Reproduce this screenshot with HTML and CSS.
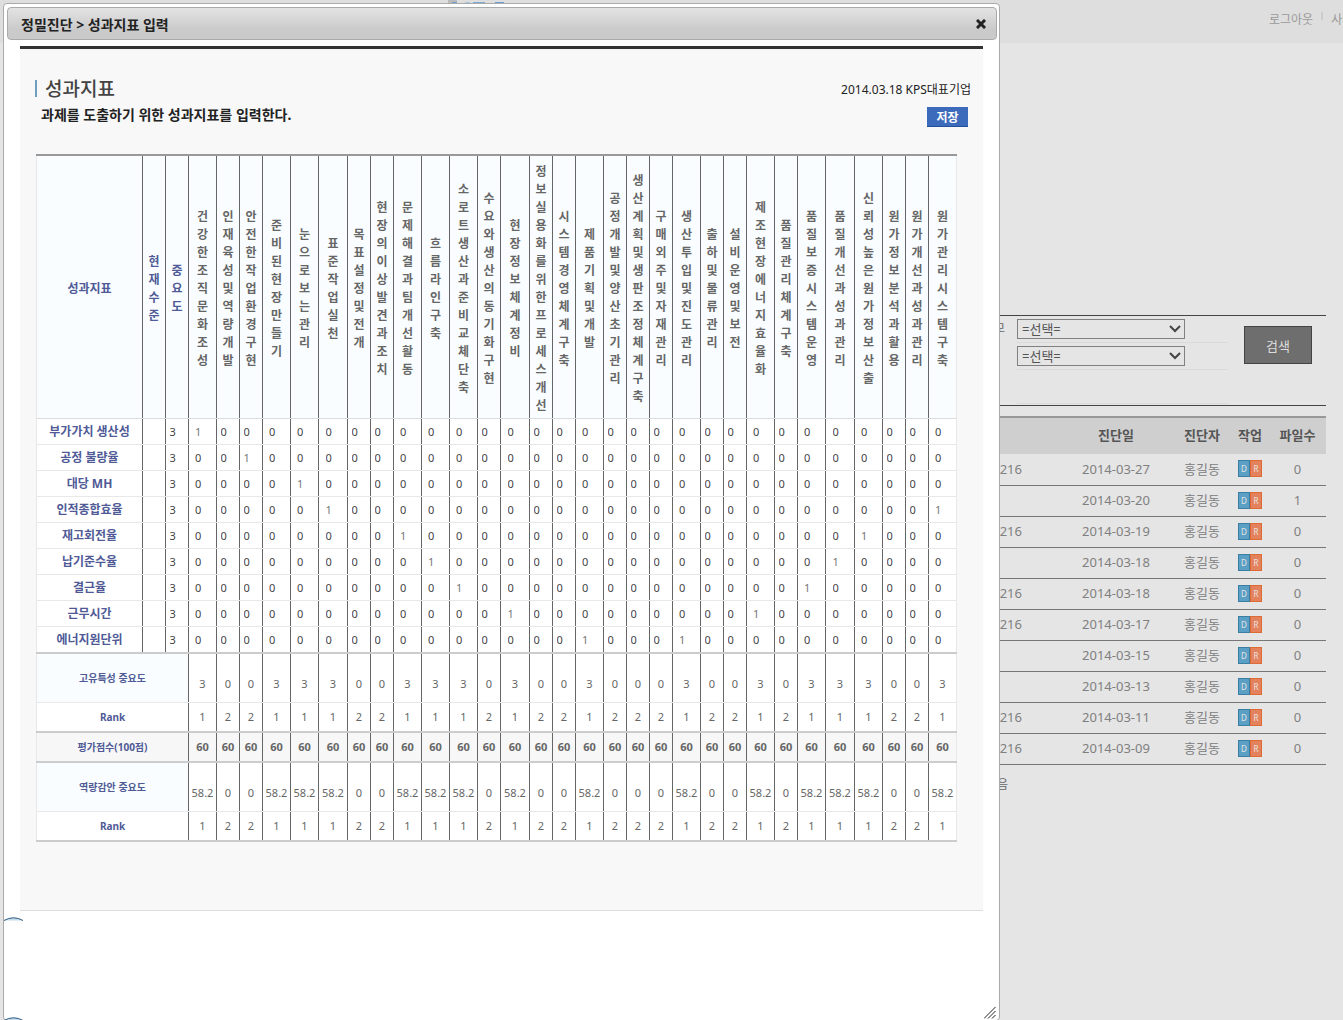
FILE: index.html
```html
<!DOCTYPE html>
<html lang="ko">
<head>
<meta charset="utf-8">
<title>정밀진단 - 성과지표 입력</title>
<link rel="stylesheet" href="styles.css">
</head>

<body>

<header class="top">
	<svg class="logo" width="60" height="3" viewBox="0 0 60 3">
		<rect x="0" y="0" width="9" height="3" fill="#bbb"/>
		<rect x="4" y="2" width="5" height="1" fill="#6d9fd2"/>
		<rect x="17" y="2" width="5" height="1" fill="#a9c4e0"/>
		<rect x="25" y="2" width="12" height="1" fill="#7fa9d6"/>
		<rect x="47" y="2" width="9" height="1" fill="#6d9fd2"/>
	</svg>
	<nav class="util">
		<a href="#">로그아웃</a>
		<i></i>
		<a href="#">사이트맵</a>
	</nav>
</header>

<main class="back">
	<form class="search">
		<div class="fields">
			<div class="field">
				<label for="size">모</label>
				<div class="line"><select id="size"><option>=선택=</option></select></div>
			</div>
			<div class="field">
				<label for="kind"></label>
				<div class="line"><select id="kind" aria-label="구분"><option>=선택=</option></select></div>
			</div>
			<div class="field last">
				<label></label>
				<div class="line"></div>
			</div>
		</div>
		<button type="button" class="find">검색</button>
	</form>

	<table class="list">
		<colgroup><col><col class="c_date"><col class="c_name"><col class="c_work"><col class="c_file"></colgroup>
		<thead>
			<tr><th></th><th>진단일</th><th>진단자</th><th>작업</th><th>파일수</th></tr>
		</thead>
		<tbody id="list"></tbody>
	</table>
	<p class="paging"><a href="#">음</a></p>
</main>

<section class="dialog" role="dialog" aria-labelledby="dlg_title">
	<div class="titlebar">
		<span id="dlg_title">정밀진단 &gt; 성과지표 입력</span>
		<button type="button" class="close" aria-label="닫기">
			<svg width="10" height="10" viewBox="0 0 10 10"><path d="M2 2 L8 8 M8 2 L2 8" stroke="#222" stroke-width="3" stroke-linecap="square"/></svg>
		</button>
	</div>

	<div class="panel">
		<div class="head">
			<div>
				<h1>성과지표</h1>
				<p class="desc">과제를 도출하기 위한 성과지표를 입력한다.</p>
			</div>
			<div class="side">
				<p class="info">2014.03.18 KPS대표기업</p>
				<button type="button" class="save">저장</button>
			</div>
		</div>
		<table class="kpi" id="kpi"></table>
	</div>

	<!-- tops of the round side buttons -->
	<svg class="knob" width="19" height="4" viewBox="0 0 19 4"><path d="M0 3.5 Q9.5 -2 19 3.5" fill="#c5d9e8" stroke="#2d5b82"/></svg>
	<svg class="knob" width="19" height="4" viewBox="0 0 19 4"><path d="M0 3.5 Q9.5 -2 19 3.5" fill="#c5d9e8" stroke="#2d5b82"/></svg>
	<svg class="grip" width="12" height="12" viewBox="0 0 12 12"><path d="M0 11.5 L11.5 0 M4 11.5 L11.5 4 M8 11.5 L11.5 8" stroke="#222" fill="none"/></svg>
</section>

<script src="code.js"></script>
</body>
</html>
```
FILE: styles.css
```css
* {
	box-sizing: border-box;
}

body, html {
	margin: 0;
	height: 100%;
	overflow: hidden;
}

body {
	position: relative;
	background: #e5e5e5;
	color: #666;
	font: 12px "Noto Sans", "Noto Sans CJK KR", sans-serif;
}

button, input, select {
	font-family: inherit;
}

a {
	color: inherit;
	text-decoration: none;
}

p, h1 {
	margin: 0;
}

table {
	width: 100%;
	table-layout: fixed;
	border-collapse: collapse;
}

/* page behind the dialog */

.top {
	display: flex;
	justify-content: space-between;
	height: 43px;
	padding-left: 448px;
	background: #dedede;
}

.util {
	display: flex;
	gap: 8px;
	width: 74px;
	padding-top: 11px;
	overflow: hidden;
	white-space: nowrap;
	line-height: 17px;
	color: #999;
}

.util i {
	flex: none;
	width: 2px;
	height: 8px;
	margin-top: 1px;
	background: #ccc;
}

.back {
	padding: 272px 17px 0 4px;
}

.search {
	display: flex;
	justify-content: flex-end;
	gap: 16px;
	height: 91px;
	padding-right: 14px;
	border-top: 1px solid #444;
	border-bottom: 1px solid #444;
}

.field {
	display: flex;
	gap: 11px;
	height: 27px;
}

.field.last {
	height: 34px;
}

.field label {
	width: 12px;
	line-height: 26px;
}

.line {
	width: 211px;
	padding-top: 3px;
	border-bottom: 1px solid #dadada;
}

.line select {
	display: block;
	appearance: none;
	width: 168px;
	height: 20px;
	padding: 0 4px;
	border: 1px solid #808080;
	border-radius: 0;
	background: url("data:image/svg+xml,%3Csvg xmlns='http://www.w3.org/2000/svg' width='12' height='8'%3E%3Cpath d='M1 1 L6 6 L11 1' fill='none' stroke='%23444' stroke-width='2'/%3E%3C/svg%3E") no-repeat right 3px center;
	color: #555;
	font-size: 13px;
	line-height: 18px;
}

.find {
	width: 68px;
	height: 38px;
	margin-top: 10px;
	border: 1px solid #444;
	background: #6e6e6e;
	color: #ddd;
	font-size: 13px;
}

.list {
	margin-top: 10px;
	border-top: 2px solid #999;
	color: #808080;
	font-size: 13px;
}

.list th {
	height: 37px;
	padding: 0 0 3px;
	background: #cfcfcf;
	color: #555;
	line-height: 18px;
}

.list td {
	height: 31px;
	padding: 0 0 1px;
	border-bottom: 1px solid #777;
	line-height: 18px;
	text-align: center;
}

.list td:first-child {
	padding-right: 37px;
	text-align: right;
}

.c_date { width: 114px; }
.c_name { width: 58px; }
.c_work { width: 38px; }
.c_file { width: 57px; }

.work {
	display: flex;
	justify-content: center;
}

.work a {
	width: 12px;
	height: 17px;
	border: 1px solid #3a7ea3;
	background: #5b9fc4;
	color: #e5e5e5;
	font-size: 8px;
	line-height: 15px;
}

.work a + a {
	border-color: #dd6b35;
	background: #e5825e;
}

.paging {
	width: 1004px;
	padding-top: 11px;
	text-align: right;
	line-height: 18px;
}

/* dialog */

.dialog {
	position: absolute;
	top: 3px;
	left: 3px;
	right: 343px;
	min-height: calc(100% - 3px);
	padding: 3px 0;
	border: 1px solid #aaa;
	border-radius: 4px;
	background: #fff;
	color: #222;
}

.titlebar {
	display: flex;
	justify-content: space-between;
	align-items: center;
	height: 33px;
	margin: 0 2px 0 3px;
	padding: 0 10px 0 13px;
	border: 1px solid #aaa;
	border-radius: 4px;
	background: linear-gradient(#e3e3e3, #cacaca 70%);
	font-size: 14px;
	font-weight: bold;
}

.close {
	display: flex;
	padding: 0;
	border: 0;
	background: none;
}

.panel {
	height: 865px;
	margin: 6px 16px 6px;
	padding: 28px 26px 0 16px;
	border-top: 3px solid #333;
	border-bottom: 1px solid #ddd;
	background: #f8f8f8;
}

.head {
	display: flex;
	justify-content: space-between;
	height: 77px;
	margin: 0 -14px 0 -1px;
}

h1 {
	display: flex;
	align-items: center;
	gap: 8px;
	height: 22px;
	color: #444;
	font-size: 19px;
	font-weight: 500;
}

h1::before {
	content: "";
	width: 2px;
	height: 17px;
	background: #6f9fbc;
}

.desc {
	margin: 6px 0 0 6px;
	font-size: 14px;
	font-weight: bold;
	line-height: 20px;
}

.side {
	display: flex;
	flex-direction: column;
	align-items: flex-end;
}

.info {
	line-height: 26px;
}

.save {
	width: 41px;
	height: 20px;
	margin: 4px 3px 0 0;
	padding: 2px 0 0;
	border: 0;
	border-bottom: 1px solid #24509c;
	background: #3d6bbb;
	color: #fff;
	font-size: 12px;
	font-weight: bold;
	line-height: 17px;
}

.kpi {
	border-top: 2px solid #999;
	border-bottom: 2px solid #ccc;
	border-left: 1px solid #e8e8e8;
	border-right: 1px solid #e8e8e8;
	background: #fff;
	font-size: 11px;
}

.kpi .n { width: 23px; }
.kpi .w { width: 28px; }
.kpi .x { width: 29px; }

.kpi th, .kpi td {
	padding: 0;
	border-bottom: 1px solid #e8e8e8;
	border-right: 1px solid #666;
	text-align: center;
	line-height: 18px;
}

.kpi th:last-child, .kpi td:last-child {
	border-right-color: #e8e8e8;
}

.kpi th {
	color: #4f5a96;
	font-size: 12px;
}

.kpi thead th {
	height: 263px;
	padding-top: 4px;
	border-bottom-color: #ddd;
	background: #f9fdff;
}

.kpi .item {
	color: #666;
}

.kpi thead span {
	display: block;
	width: 12px;
	margin: 0 auto;
}

.kpi tbody tr {
	height: 26px;
}

.kpi tbody th {
	padding-top: 2px;
}

.kpi tbody tr:last-child {
	height: 27px;
}

.kpi input {
	display: block;
	width: 15px;
	height: 16px;
	margin: 0 auto;
	padding: 0;
	border: 0;
	background: none;
	color: #444;
	font-size: 11px;
}

.kpi input.on {
	color: #777;
}

.kpi tfoot {
	color: #666;
}

.kpi tfoot th {
	font-size: 10px;
}

.kpi .sum {
	height: 49px;
	border-top: 2px solid #ccc;
}

.kpi .sum th {
	background: #f9fdff;
}

.kpi .sum td {
	padding-top: 13px;
}

.kpi .rank, .kpi .score {
	height: 30px;
}

.kpi .score {
	border-top: 2px solid #ccc;
	background: #f7f7f7;
	font-weight: bold;
}

.knob {
	display: block;
	margin-bottom: 96px;
}

.knob + .knob {
	margin-bottom: 0;
	position: absolute;
	left: 0;
	bottom: -1px;
}

.grip {
	position: absolute;
	right: 3px;
	bottom: 1px;
}
```
FILE: code.js
```js
const items = [
	'건강한조직문화조성', '인재육성및역량개발', '안전한작업환경구현', '준비된현장만들기', '눈으로보는관리',
	'표준작업실천', '목표설정및전개', '현장의이상발견과조치', '문제해결과팀개선활동', '흐름라인구축',
	'소로트생산과준비교체단축', '수요와생산의동기화구현', '현장정보체계정비', '정보실용화를위한프로세스개선', '시스템경영체계구축',
	'제품기획및개발', '공정개발및양산초기관리', '생산계획및생판조정체계구축', '구매외주및자재관리', '생산투입및진도관리',
	'출하및물류관리', '설비운영및보전', '제조현장에너지효율화', '품질관리체계구축', '품질보증시스템운영',
	'품질개선과성과관리', '신뢰성높은원가정보산출', '원가정보분석과활용', '원가개선과성과관리', '원가관리시스템구축'
]

// name and the columns that are marked with 1
const rows = [
	['부가가치 생산성', [0]],
	['공정 불량율', [2]],
	['대당 MH', [4]],
	['인적종합효율', [5, 29]],
	['재고회전율', [8, 26]],
	['납기준수율', [9, 25]],
	['결근율', [10, 24]],
	['근무시간', [12, 22]],
	['에너지원단위', [15, 19]]
]

// columns that have a weight, their cells are wider
const weighted = [0, 3, 4, 5, 8, 9, 10, 12, 15, 19, 22, 24, 25, 26, 29]
const marked = items.map((_, i) => weighted.includes(i))
const widest = [5, 12, 25]

const cells = fn => items.map((_, i) => `<td>${fn(i)}</td>`).join('')
const field = (label, value) => `<input aria-label="${label}" value="${value}"${value === 1 ? ' class="on"' : ''}>`
const foot = (cls, name, fn) => `<tr class="${cls}"><th colspan="3">${name}</th>${cells(fn)}</tr>`

let html = '<colgroup><col><col class="n"><col class="n">'
html += marked.map((m, i) => `<col class="${widest.includes(i) ? 'x' : m ? 'w' : 'n'}">`).join('')
html += '</colgroup><thead><tr><th>성과지표</th><th><span>현재수준</span></th><th><span>중요도</span></th>'
html += items.map(t => `<th class="item"><span>${t}</span></th>`).join('')
html += '</tr></thead><tbody>'

for (const [name, ones] of rows) {
	html += `<tr><th>${name}</th><td>${field(name + ' 현재수준', '')}</td><td>${field(name + ' 중요도', 3)}</td>`
	html += cells(i => field(name + ' ' + items[i], ones.includes(i) ? 1 : 0)) + '</tr>'
}

html += '</tbody><tfoot>'
html += foot('sum', '고유특성 중요도', i => marked[i] ? 3 : 0)
html += foot('rank', 'Rank', i => marked[i] ? 1 : 2)
html += foot('score', '평가점수(100점)', () => 60)
html += foot('sum', '역량감안 중요도', i => marked[i] ? 58.2 : 0)
html += foot('rank', 'Rank', i => marked[i] ? 1 : 2)
html += '</tfoot>'

document.getElementById('kpi').innerHTML = html

const list = [
	['216', '27', 0], ['', '20', 1], ['216', '19', 0], ['', '18', 0], ['216', '18', 0],
	['216', '17', 0], ['', '15', 0], ['', '13', 0], ['216', '11', 0], ['216', '09', 0]
]

document.getElementById('list').innerHTML = list.map(([no, day, files]) =>
	`<tr><td>${no}</td><td>2014-03-${day}</td><td>홍길동</td><td><div class="work"><a href="#">D</a><a href="#">R</a></div></td><td>${files}</td></tr>`
).join('')
```
